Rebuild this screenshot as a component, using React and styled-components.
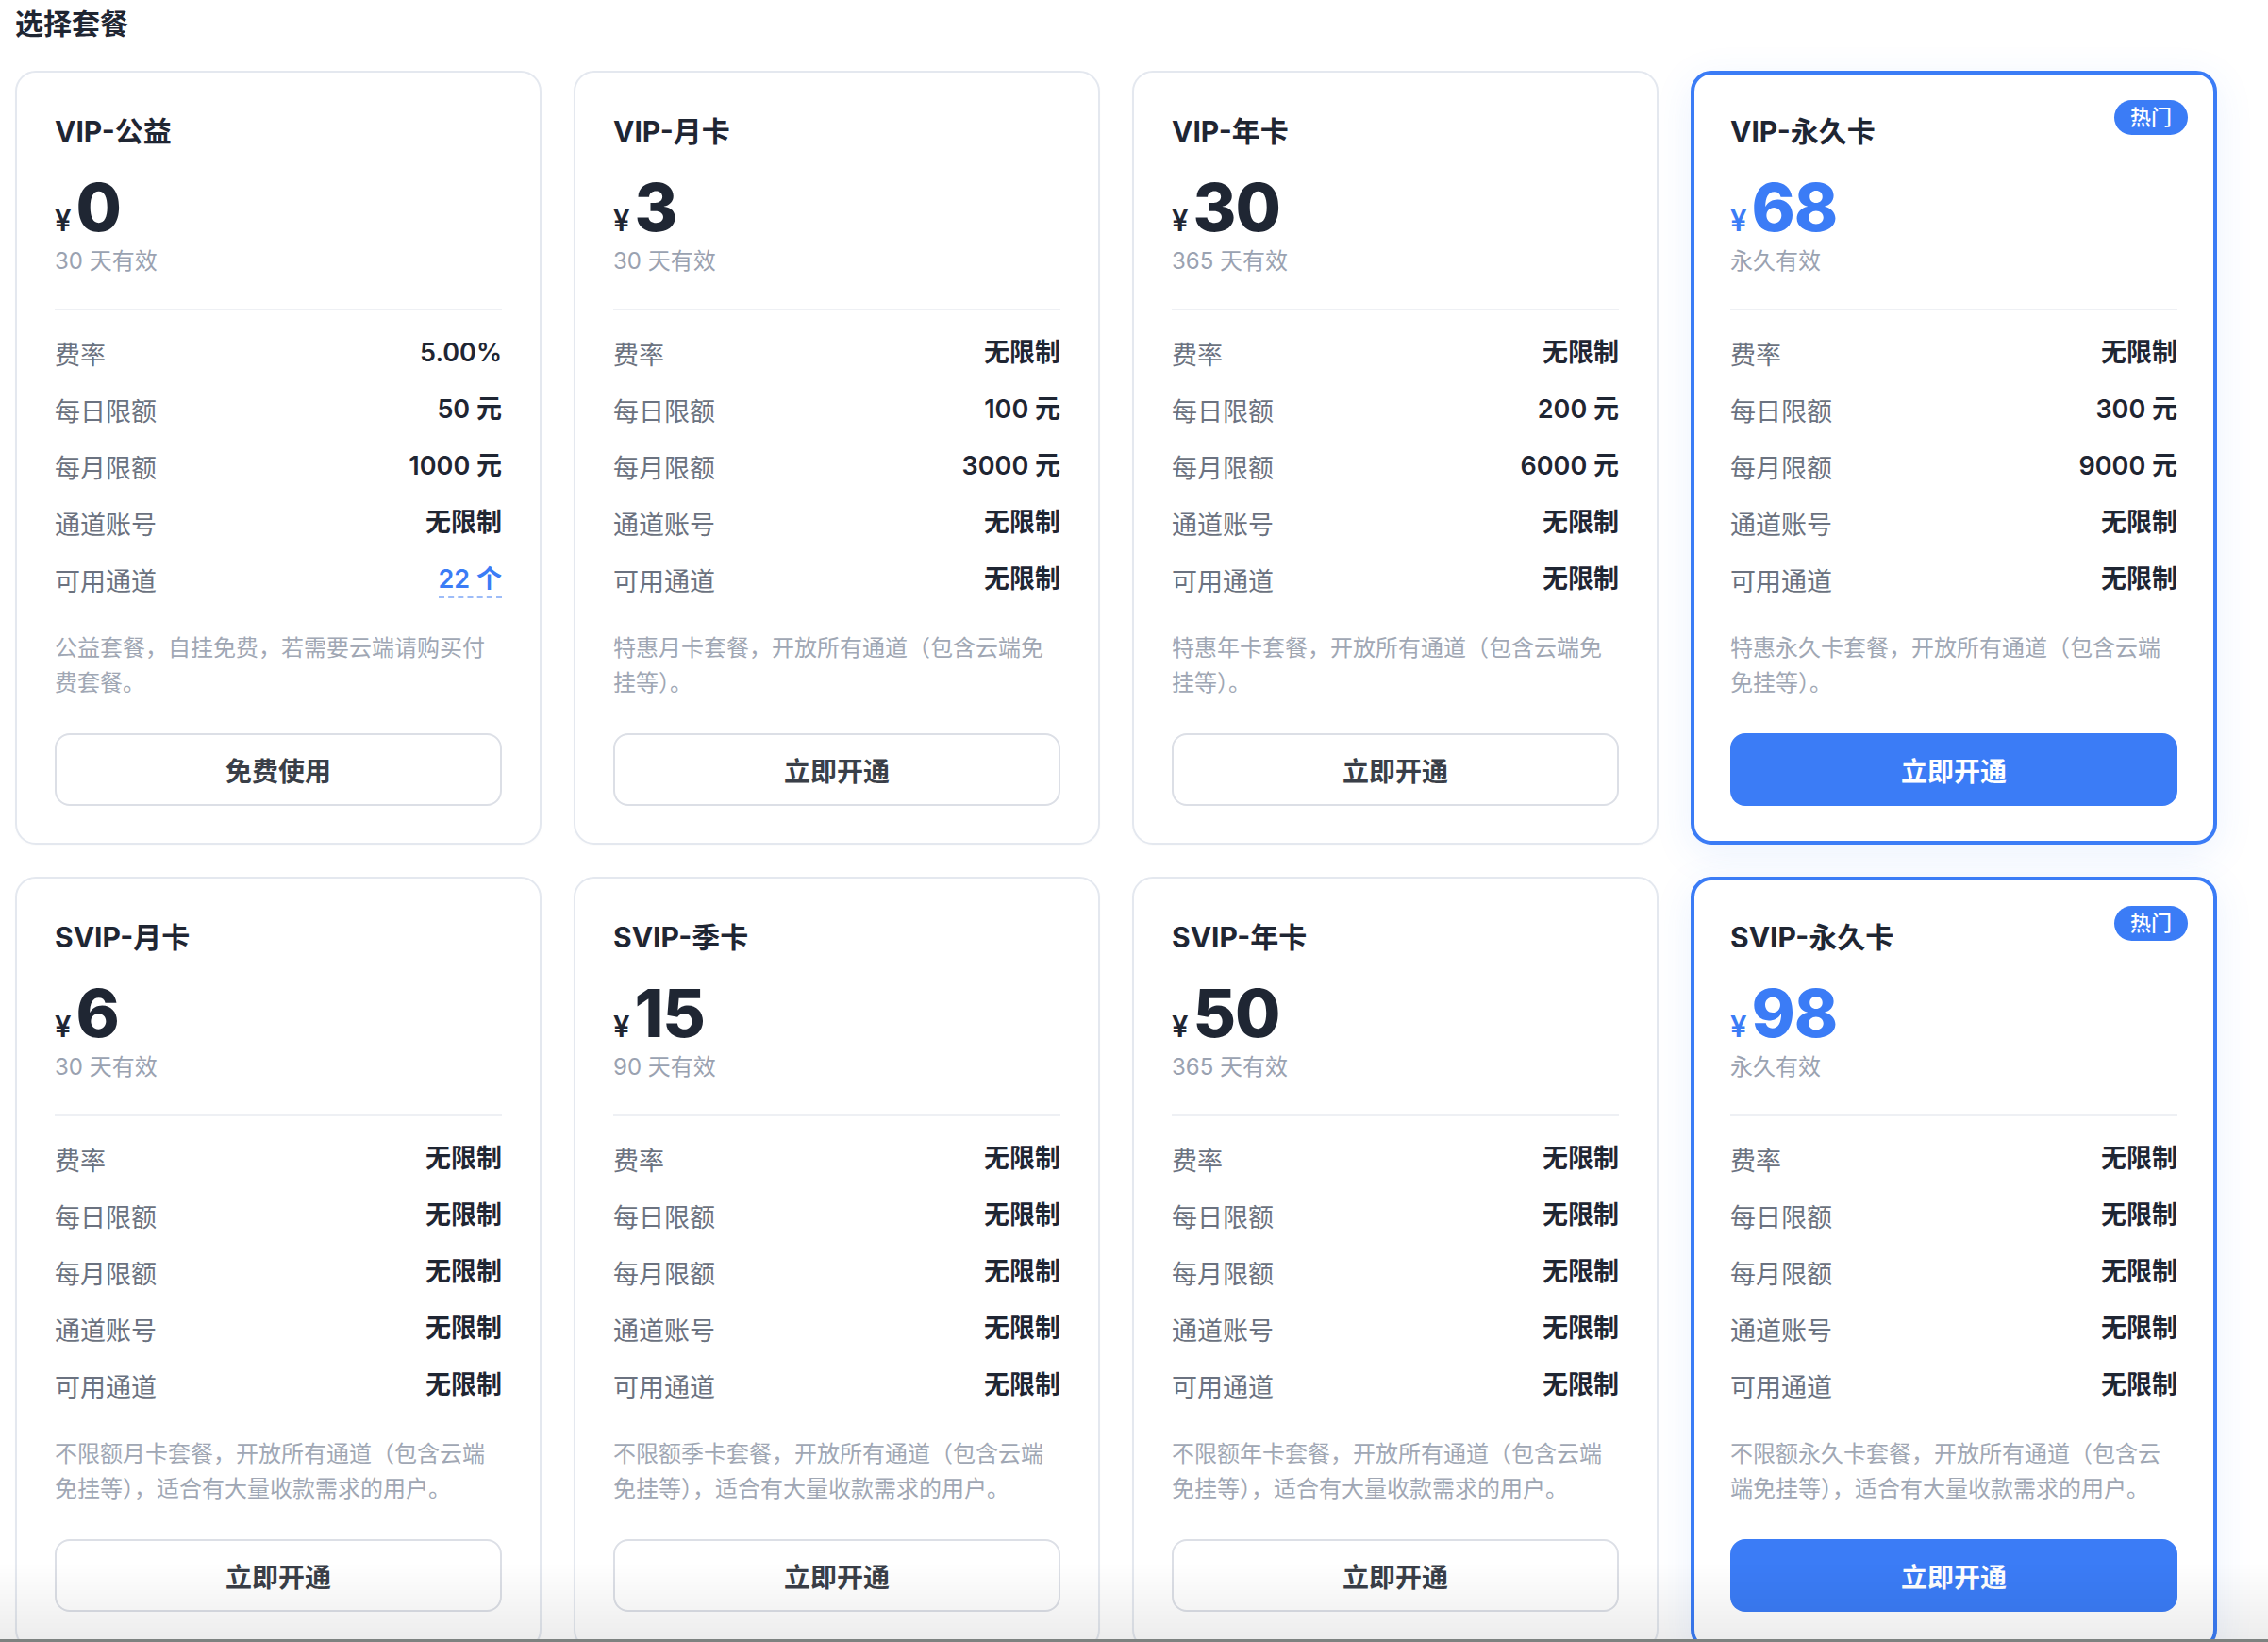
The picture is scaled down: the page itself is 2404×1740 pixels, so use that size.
import styled, { createGlobalStyle } from "styled-components"

const GlobalStyle = createGlobalStyle`
    html, body{
        margin: 0;
        padding: 0;
        background: #ffffff;
        overflow: hidden;
    }
    body{
        font-family: "Inter", "Noto Sans CJK SC", sans-serif;
        color: #1f2633;
    }
    *{
        box-sizing: border-box;
    }
`

const plans = [
    {
        name: "VIP-公益", price: "0", period: "30 天有效",
        rows: [["费率", "5.00%"], ["每日限额", "50 元"], ["每月限额", "1000 元"], ["通道账号", "无限制"], ["可用通道", "22 个", true]],
        desc: "公益套餐，自挂免费，若需要云端请购买付费套餐。",
        action: "免费使用"
    },
    {
        name: "VIP-月卡", price: "3", period: "30 天有效",
        rows: [["费率", "无限制"], ["每日限额", "100 元"], ["每月限额", "3000 元"], ["通道账号", "无限制"], ["可用通道", "无限制"]],
        desc: "特惠月卡套餐，开放所有通道（包含云端免挂等）。",
        action: "立即开通"
    },
    {
        name: "VIP-年卡", price: "30", period: "365 天有效",
        rows: [["费率", "无限制"], ["每日限额", "200 元"], ["每月限额", "6000 元"], ["通道账号", "无限制"], ["可用通道", "无限制"]],
        desc: "特惠年卡套餐，开放所有通道（包含云端免挂等）。",
        action: "立即开通"
    },
    {
        name: "VIP-永久卡", price: "68", period: "永久有效", hot: true,
        rows: [["费率", "无限制"], ["每日限额", "300 元"], ["每月限额", "9000 元"], ["通道账号", "无限制"], ["可用通道", "无限制"]],
        desc: "特惠永久卡套餐，开放所有通道（包含云端免挂等）。",
        action: "立即开通"
    },
    {
        name: "SVIP-月卡", price: "6", period: "30 天有效",
        rows: [["费率", "无限制"], ["每日限额", "无限制"], ["每月限额", "无限制"], ["通道账号", "无限制"], ["可用通道", "无限制"]],
        desc: "不限额月卡套餐，开放所有通道（包含云端免挂等），适合有大量收款需求的用户。",
        action: "立即开通"
    },
    {
        name: "SVIP-季卡", price: "15", period: "90 天有效",
        rows: [["费率", "无限制"], ["每日限额", "无限制"], ["每月限额", "无限制"], ["通道账号", "无限制"], ["可用通道", "无限制"]],
        desc: "不限额季卡套餐，开放所有通道（包含云端免挂等），适合有大量收款需求的用户。",
        action: "立即开通"
    },
    {
        name: "SVIP-年卡", price: "50", period: "365 天有效",
        rows: [["费率", "无限制"], ["每日限额", "无限制"], ["每月限额", "无限制"], ["通道账号", "无限制"], ["可用通道", "无限制"]],
        desc: "不限额年卡套餐，开放所有通道（包含云端免挂等），适合有大量收款需求的用户。",
        action: "立即开通"
    },
    {
        name: "SVIP-永久卡", price: "98", period: "永久有效", hot: true,
        rows: [["费率", "无限制"], ["每日限额", "无限制"], ["每月限额", "无限制"], ["通道账号", "无限制"], ["可用通道", "无限制"]],
        desc: "不限额永久卡套餐，开放所有通道（包含云端免挂等），适合有大量收款需求的用户。",
        action: "立即开通"
    }
]

export default function App(){
    return (
        <>
            <GlobalStyle/>
            <Page>
                <PageTitle>选择套餐</PageTitle>
                <Grid>
                    {plans.map((p)=>(
                        <Card key={p.name} $hot={p.hot}>
                            {p.hot && <Badge>热门</Badge>}
                            <PlanName>{p.name}</PlanName>
                            <PriceLine $hot={p.hot}>
                                <span className="yen">¥</span>
                                <span className="num">{p.price}</span>
                            </PriceLine>
                            <Period>{p.period}</Period>
                            <Divider/>
                            <Rows>
                                {p.rows.map(([label, value, link])=>(
                                    <Row key={label}>
                                        <span className="label">{label}</span>
                                        <Value $link={link}>{value}</Value>
                                    </Row>
                                ))}
                            </Rows>
                            <Desc>{p.desc}</Desc>
                            <ActionButton $primary={p.hot}>{p.action}</ActionButton>
                        </Card>
                    ))}
                </Grid>
            </Page>
            <BottomFade/>
        </>
    )
}

const Page = styled.div`
    padding: 5px 54px 0 16px;
`

const PageTitle = styled.h1`
    margin: 0 0 30px 0;
    font-size: 30px;
    line-height: 40px;
    font-weight: 700;
    color: #1f2633;
`

const Grid = styled.div`
    display: grid;
    grid-template-columns: repeat(4, 1fr);
    gap: 34px;
`

const Card = styled.div`
    position: relative;
    display: flex;
    flex-direction: column;
    padding: ${p => p.$hot ? "38px 38px 37px 38px" : "40px 40px 39px 40px"};
    background: #ffffff;
    border: ${p => p.$hot ? "4px solid #3b7cf6" : "2px solid #e4e8ef"};
    border-radius: 22px;
    box-shadow: ${p => p.$hot
        ? "0 10px 40px rgba(59,124,246,0.10)"
        : "0 1px 3px rgba(15,23,42,0.02)"};
`

const Badge = styled.span`
    position: absolute;
    top: 27px;
    right: 27px;
    height: 37px;
    padding: 0 17px;
    border-radius: 999px;
    background: #3b7cf6;
    color: #ffffff;
    font-size: 22px;
    font-weight: 500;
    line-height: 37px;
`

const PlanName = styled.div`
    font-size: 30px;
    line-height: 44px;
    font-weight: 700;
    color: #1f2633;
`

const PriceLine = styled.div`
    margin-top: 24px;
    display: flex;
    align-items: baseline;
    line-height: 70px;
    height: 70px;
    color: ${p => p.$hot ? "#3b7cf6" : "#1f2633"};

    .yen{
        font-size: 31px;
        font-weight: 600;
        margin-right: 5px;
    }
    .num{
        font-size: 70px;
        font-weight: 800;
        letter-spacing: -1px;
    }
`

const Period = styled.div`
    margin-top: 4px;
    font-size: 24px;
    line-height: 36px;
    color: #9aa2b1;
`

const Divider = styled.div`
    margin-top: 32px;
    height: 2px;
    background: #eef0f4;
`

const Rows = styled.div`
    margin-top: 15px;
    display: flex;
    flex-direction: column;
`

const Row = styled.div`
    display: flex;
    justify-content: space-between;
    align-items: center;
    height: 60px;

    .label{
        font-size: 27px;
        color: #6b7280;
    }
`

const Value = styled.span`
    font-size: 27px;
    font-weight: 600;
    color: ${p => p.$link ? "#3b7cf6" : "#1f2633"};
    line-height: 36px;
    padding-top: 2px;
    border-bottom: ${p => p.$link ? "2px dashed #9dbcf8" : "2px solid transparent"};
`

const Desc = styled.p`
    margin: 24px 0 0 0;
    font-size: 24px;
    line-height: 37px;
    color: #a0a7b4;
`

const ActionButton = styled.button`
    margin-top: 35px;
    height: 77px;
    width: 100%;
    border-radius: 16px;
    font-family: inherit;
    font-size: 28px;
    font-weight: 600;
    cursor: pointer;
    border: ${p => p.$primary ? "none" : "2px solid #dcdfe6"};
    background: ${p => p.$primary ? "#3b7cf6" : "#ffffff"};
    color: ${p => p.$primary ? "#ffffff" : "#3a3f48"};
`

const BottomFade = styled.div`
    position: fixed;
    left: 0;
    right: 0;
    bottom: 0;
    height: 84px;
    pointer-events: none;
    background: linear-gradient(to bottom, rgba(0,0,0,0), rgba(0,0,0,0.075));

    &::after{
        content: "";
        position: absolute;
        left: 0;
        right: 0;
        bottom: 0;
        height: 3px;
        background: #7d8280;
    }
`
